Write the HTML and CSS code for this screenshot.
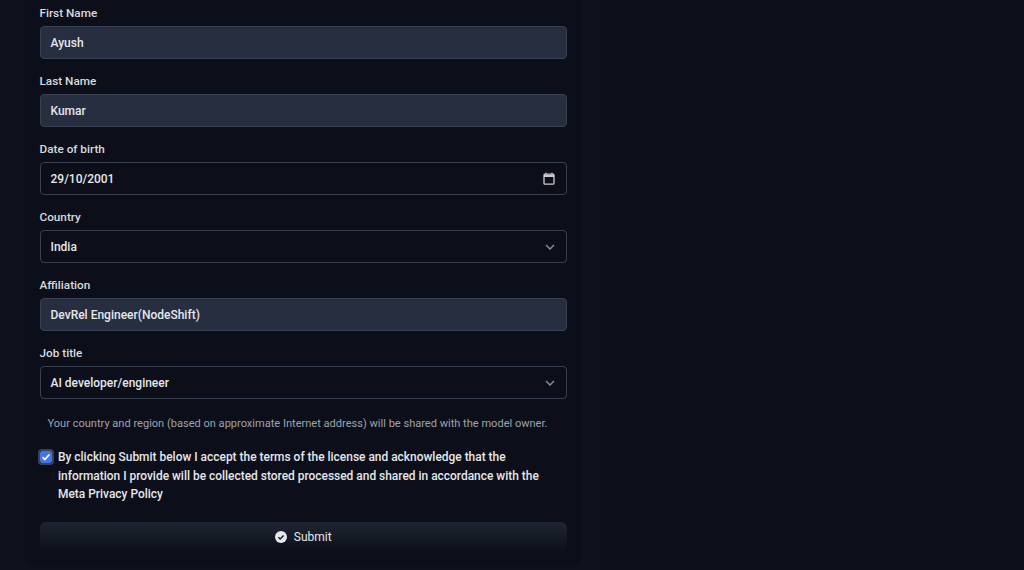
FILE: index.html
```html
<!DOCTYPE html>
<html lang="en">
<head>
<meta charset="utf-8">
<title>Access form</title>
<link rel="stylesheet" href="styles.css">
</head>
<body>
<div class="rail">
<main class="panel">
<form class="form">
  <div class="field"><span class="label">First Name</span><div class="control filled">Ayush</div></div>
  <div class="field"><span class="label">Last Name</span><div class="control filled">Kumar</div></div>
  <div class="field"><span class="label">Date of birth</span><div class="control"><span>29/10/2001</span>
    <svg class="cal" viewBox="0 0 12 13" width="12" height="13"><path d="M1 3.2a1 1 0 0 1 1-1h8a1 1 0 0 1 1 1v8a1 1 0 0 1-1 1H2a1 1 0 0 1-1-1z" fill="none" stroke="#c9cbd0" stroke-width="1.3"/><path d="M1 3h10v2H1z" fill="#c9cbd0"/><path d="M3 .8v2M9 .8v2" stroke="#c9cbd0" stroke-width="1.2"/></svg></div></div>
  <div class="field"><span class="label">Country</span><div class="control"><span>India</span>
    <svg class="chev" viewBox="0 0 10 6" width="10" height="6"><path d="M1 1l4 4 4-4" fill="none" stroke="#8d929c" stroke-width="1.4"/></svg></div></div>
  <div class="field"><span class="label">Affiliation</span><div class="control filled">DevRel Engineer(NodeShift)</div></div>
  <div class="field"><span class="label">Job title</span><div class="control"><span>AI developer/engineer</span>
    <svg class="chev" viewBox="0 0 10 6" width="10" height="6"><path d="M1 1l4 4 4-4" fill="none" stroke="#8d929c" stroke-width="1.4"/></svg></div></div>
  <p class="note">Your country and region (based on approximate Internet address) will be shared with the model owner.</p>
  <div class="consent">
    <span class="check"><svg viewBox="0 0 10 10" width="10" height="10"><path d="M1.5 5.2l2.3 2.3 4.6-5" fill="none" stroke="#fff" stroke-width="1.7"/></svg></span>
    <p class="consent-text">By clicking Submit below I accept the terms of the license and acknowledge that the information I provide will be collected stored processed and shared in accordance with the Meta Privacy Policy</p>
  </div>
  <div class="submit">
    <svg viewBox="0 0 12 12" width="12" height="12"><circle cx="6" cy="6" r="6" fill="#e5e7eb"/><path d="M3.4 6.2l1.8 1.8 3.4-3.6" fill="none" stroke="#1a1f2b" stroke-width="1.5"/></svg>
    <span>Submit</span>
  </div>
</form>
</main>
</div>
</body>
</html>
```

FILE: styles.css
```css
* { box-sizing: border-box; }
html, body { margin: 0; height: 570px; overflow: hidden; background: #0c0f19; }
body { font-family: Roboto, "Noto Sans", sans-serif; font-size: 12px; font-weight: 500; color: #e5e7eb; }
.rail { width: 600px; height: 570px; background: #0e121c; }
.panel { margin-left: 24px; width: 558px; height: 565px; background: #0c0f19; border-radius: 0 0 10px 10px; padding: 4px 15px 0 15.5px; }
.form { display: flex; flex-direction: column; width: 527.5px; }
.field { display: flex; flex-direction: column; margin-bottom: 1px; height: 67px; }
.label { height: 18px; line-height: 18.5px; margin-bottom: 4px; font-size: 11.75px; color: #d8dade; }
.control { height: 33px; display: flex; align-items: center; justify-content: space-between; padding: 0 10px; border: 1px solid #374151; border-radius: 4px; color: #e5e7eb; }
.filled { background: #262e40; }
.cal { margin-right: 1px; }
.chev { margin-right: 1px; }
.note { margin: 2px 0 0; padding: 0 8px; height: 20px; line-height: 20px; font-size: 11.05px; font-weight: 400; color: #9ca3af; white-space: nowrap; }
.consent { display: flex; gap: 6.5px; margin: 14px 0 0; }
.check { flex: none; width: 12px; height: 12px; margin: 2.5px 0 0 0; background: #4274ee; border-radius: 2px; display: flex; align-items: center; justify-content: center; outline: 2px solid #3a4356; outline-offset: 0; }
.consent-text { margin: 0; width: 490px; line-height: 18.6px; font-size: 11.95px; color: #e5e7eb; }
.submit { margin-top: 18px; height: 30px; border-radius: 6px 6px 4px 4px; display: flex; align-items: center; justify-content: center; gap: 7px; font-weight: 400; background: linear-gradient(180deg, #1f2533, #0c0f19); color: #e5e7eb; }
```
